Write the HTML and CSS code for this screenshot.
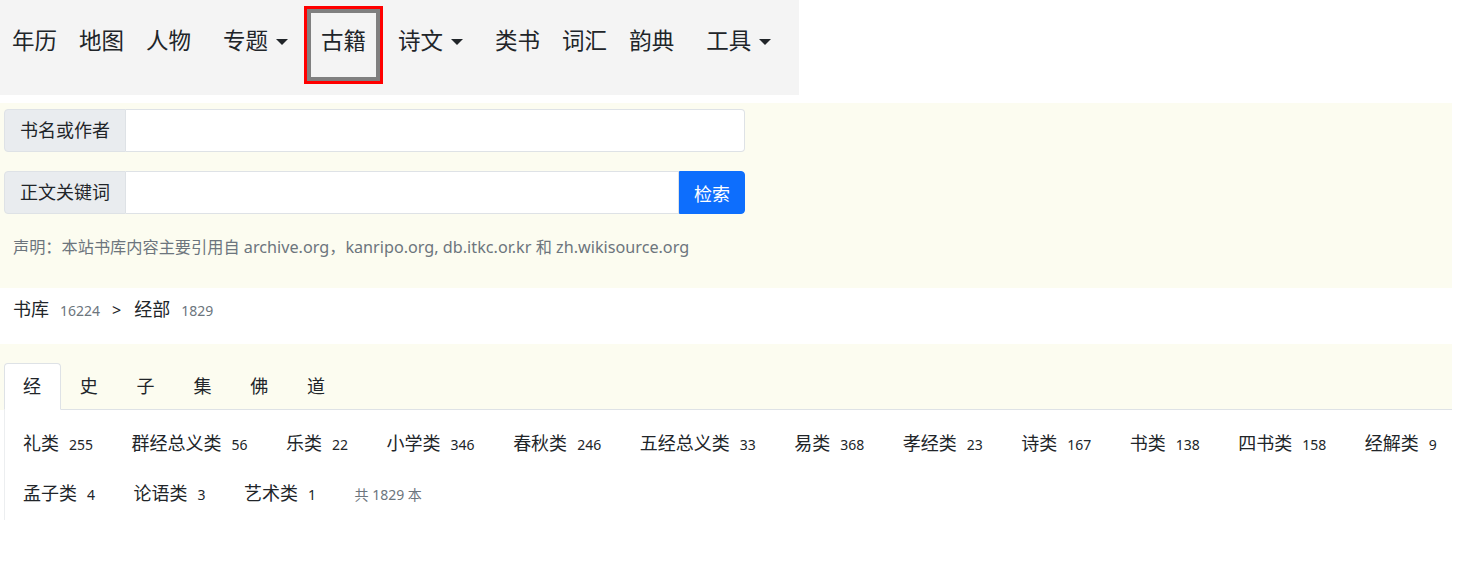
FILE: index.html
```html
<!DOCTYPE html>
<html lang="zh">
<head>
  <meta charset="UTF-8">
  <title>古籍</title>
  <link rel="stylesheet" href="styles.css">
</head>
<body>
  <div class="page">
    <nav class="topnav">
      <a class="nav-link">年历</a>
      <a class="nav-link">地图</a>
      <a class="nav-link">人物</a>
      <a class="nav-link dropdown">专题<span class="caret"></span></a>
      <a class="nav-link active">古籍</a>
      <a class="nav-link dropdown">诗文<span class="caret"></span></a>
      <a class="nav-link">类书</a>
      <a class="nav-link">词汇</a>
      <a class="nav-link">韵典</a>
      <a class="nav-link dropdown">工具<span class="caret"></span></a>
    </nav>

    <div class="search-box">
      <div class="input-group">
        <span class="group-label">书名或作者</span>
        <input type="text" class="group-input">
      </div>
      <div class="input-group second">
        <span class="group-label">正文关键词</span>
        <input type="text" class="group-input">
        <button class="search-btn">检索</button>
      </div>
      <p class="notice">声明：本站书库内容主要引用自 archive.org，kanripo.org, db.itkc.or.kr 和 zh.wikisource.org</p>
    </div>

    <div class="breadcrumb">
      <span>书库</span><small class="num">16224</small><span class="sep">&gt;</span><span>经部</span><small class="num">1829</small>
    </div>

    <div class="tabs-area">
      <ul class="tabs">
        <li class="tab active">经</li>
        <li class="tab">史</li>
        <li class="tab">子</li>
        <li class="tab">集</li>
        <li class="tab">佛</li>
        <li class="tab">道</li>
      </ul>
    </div>

    <div class="tab-content">
      <span class="cat">礼类<small>255</small></span>
      <span class="cat">群经总义类<small>56</small></span>
      <span class="cat">乐类<small>22</small></span>
      <span class="cat">小学类<small>346</small></span>
      <span class="cat">春秋类<small>246</small></span>
      <span class="cat">五经总义类<small>33</small></span>
      <span class="cat">易类<small>368</small></span>
      <span class="cat">孝经类<small>23</small></span>
      <span class="cat">诗类<small>167</small></span>
      <span class="cat">书类<small>138</small></span>
      <span class="cat">四书类<small>158</small></span>
      <span class="cat">经解类<small>9</small></span>
      <span class="cat">孟子类<small>4</small></span>
      <span class="cat">论语类<small>3</small></span>
      <span class="cat">艺术类<small>1</small></span>
      <span class="total">共 1829 本</span>
    </div>
  </div>
</body>
</html>
```

FILE: styles.css
```css
body {
  margin: 0;
  padding: 0;
  font-family: "Noto Sans", "Noto Sans CJK SC", sans-serif;
  color: #212529;
  background: #fff;
}

.page {
  width: 1452px;
}

/* top navigation */
.topnav {
  width: 799px;
  height: 95px;
  box-sizing: border-box;
  padding: 9px 0 0 12px;
  background: #f4f4f4;
  display: flex;
  align-items: flex-start;
  gap: 22px;
}

.nav-link {
  font-size: 22.5px;
  line-height: 30px;
  padding-top: 17px;
  color: #212529;
  display: flex;
  align-items: center;
  white-space: nowrap;
}

.dropdown {
  margin: 0 10px 0 10px;
}

.caret {
  display: inline-block;
  margin-left: 8px;
  margin-top: 2px;
  width: 0;
  height: 0;
  border-top: 6px solid #212529;
  border-left: 6px solid transparent;
  border-right: 6px solid transparent;
}

.nav-link.active {
  padding: 13px 10px 21px;
  border: 4px solid #808080;
  outline: 3px solid #ff0000;
  margin: 0 -14px 0 -13px;
}

/* search */
.search-box {
  margin-top: 8px;
  background: #fcfcf0;
  padding: 6px 0 29px 4px;
}

.input-group {
  display: flex;
  width: 741px;
  height: 43px;
  font-size: 18px;
}

.input-group.second {
  margin-top: 19px;
}

.group-label {
  display: flex;
  align-items: center;
  padding: 0 15px;
  background: #e9ecef;
  border: 1px solid #dee2e6;
  border-radius: 4px 0 0 4px;
  line-height: 27px;
}

.group-input {
  flex: 1;
  min-width: 0;
  margin: 0;
  border: 1px solid #dee2e6;
  border-left: none;
  border-radius: 0 4px 4px 0;
  background: #fff;
  font-size: 18px;
}

.second .group-input {
  border-radius: 0;
}

.search-btn {
  width: 66px;
  margin: 0;
  border: 1px solid #0d6efd;
  border-radius: 0 4px 4px 0;
  background: #0d6efd;
  color: #fff;
  font-family: inherit;
  font-size: 18px;
  padding: 0;
}

.notice {
  margin: 21px 0 0 9px;
  font-size: 16.2px;
  line-height: 24px;
  color: #6c757d;
}

/* breadcrumb */
.breadcrumb {
  height: 56px;
  box-sizing: border-box;
  padding: 8px 0 0 13px;
  font-size: 18px;
  line-height: 27px;
}

.breadcrumb .num {
  font-size: 14px;
  color: #6c757d;
  margin-left: 11px;
}

.breadcrumb .sep {
  font-size: 16px;
  margin: 0 13px 0 12px;
}

/* tabs */
.tabs-area {
  background: #fcfcf0;
  padding: 19px 0 0 4px;
}

.tabs {
  list-style: none;
  margin: 0;
  padding: 0;
  display: flex;
  border-bottom: 1px solid #dee2e6;
}

.tab {
  font-size: 18px;
  line-height: 27px;
  padding: 9px 18.8px 9px 18px;
  border: 1px solid transparent;
  border-radius: 4px 4px 0 0;
  margin-bottom: -1px;
}

.tab.active {
  background: #fff;
  border-color: #dee2e6 #dee2e6 #fff;
}

.tab-content {
  margin-left: 4px;
  border-left: 1px solid #eceef0;
  background: #fff;
  padding: 9px 0 1px 18px;
  display: flex;
  flex-wrap: wrap;
  column-gap: 38.5px;
}

.cat {
  font-size: 18px;
  line-height: 48px;
  white-space: nowrap;
}

.cat small {
  font-size: 14px;
  margin-left: 10px;
}

.total {
  font-size: 14px;
  line-height: 48px;
  color: #6c757d;
  padding-top: 2px;
}
```
